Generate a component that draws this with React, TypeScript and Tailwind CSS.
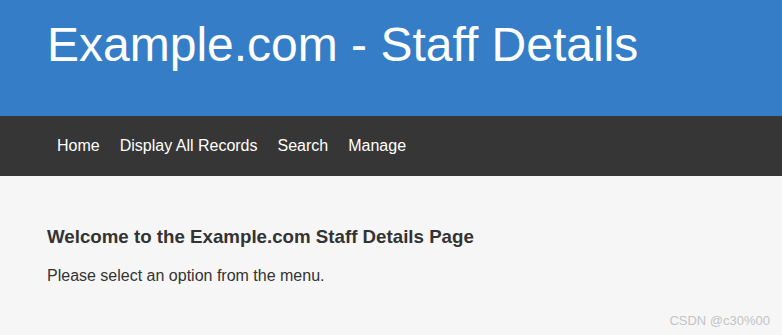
import React from "react";

const links = ["Home", "Display All Records", "Search", "Manage"];

export default function App() {
  return (
    <div className="relative flex min-h-[335px] flex-col bg-[#f6f6f6] font-['Liberation_Sans',Arial,sans-serif]">
      <header className="h-[116px] bg-[#357ec7] px-[47px] pt-[21px]">
        <h1 className="text-[48px] leading-[48px] text-white">Example.com - Staff Details</h1>
      </header>

      <nav className="flex h-[60px] items-center bg-[#363636] px-[47px]">
        {links.map((l) => (
          <a key={l} href="#" className="px-[10px] text-[16px] leading-[60px] text-white">
            {l}
          </a>
        ))}
      </nav>

      <main className="flex-1 px-[47px] pt-[50px] text-[#333]">
        <h3 className="text-[18.72px] font-bold leading-[22px]">
          Welcome to the Example.com Staff Details Page
        </h3>
        <p className="mt-[17px] text-[16px] leading-[22px]">Please select an option from the menu.</p>
      </main>

      <span className="absolute right-[12px] top-[313px] text-[13px] leading-[16px] text-[#c4c4c4]">
        CSDN @c30%00
      </span>
    </div>
  );
}
